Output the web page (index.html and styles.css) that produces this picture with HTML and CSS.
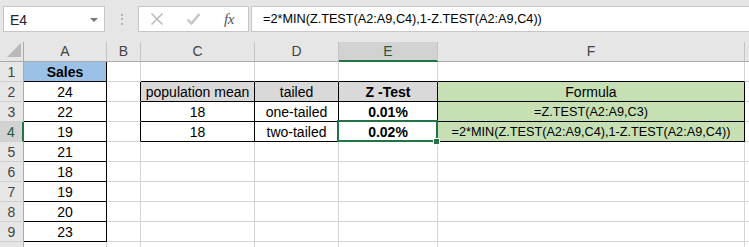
FILE: index.html
```html
<!DOCTYPE html>
<html>
<head>
<meta charset="utf-8">
<link rel="stylesheet" href="styles.css">
</head>
<body>
<div class="app">
  <div class="toolbar">
    <div class="namebox"><span class="name">E4</span><span class="caret"></span></div>
    <div class="grip"><i></i><i></i><i></i></div>
    <div class="fxbox">
      <svg class="ico" width="14" height="14" viewBox="0 0 14 14"><path d="M1.5 1.5 L12.5 12.5 M12.5 1.5 L1.5 12.5" stroke="#bcbcbc" stroke-width="1.6" fill="none"/></svg>
      <svg class="ico" width="15" height="14" viewBox="0 0 15 14"><path d="M1.5 7.5 L5.5 11.5 L13.5 2" stroke="#c4c4c4" stroke-width="2.4" fill="none"/></svg>
      <span class="fx">fx</span>
    </div>
    <div class="formula">=2*MIN(Z.TEST(A2:A9,C4),1-Z.TEST(A2:A9,C4))</div>
  </div>
  <div class="sheet">
    <div class="corner"><svg width="24" height="19" viewBox="0 0 24 19"><path d="M21 1 L21 15 L7 15 Z" fill="#b9b9b9"/></svg></div>
    <div class="ch">A</div><div class="ch">B</div><div class="ch">C</div><div class="ch">D</div><div class="ch sel">E</div><div class="ch">F</div><div class="ch"></div>

    <div class="rh">1</div><div class="c bx blue bold">Sales</div><div class="c"></div><div class="c bt"></div><div class="c bt"></div><div class="c bt"></div><div class="c bt"></div><div class="c"></div>

    <div class="rh">2</div><div class="c bx">24</div><div class="c bl"></div><div class="c bx grey">population mean</div><div class="c bx grey">tailed</div><div class="c bx grey bold">Z -Test</div><div class="c bx green">Formula</div><div class="c"></div>

    <div class="rh">3</div><div class="c bx">22</div><div class="c bl"></div><div class="c bx">18</div><div class="c bx">one-tailed</div><div class="c bx bold">0.01%</div><div class="c bx green f">=Z.TEST(A2:A9,C3)</div><div class="c"></div>

    <div class="rh rsel">4</div><div class="c bx">19</div><div class="c bl"></div><div class="c bx">18</div><div class="c bx">two-tailed</div><div class="c bx bold">0.02%</div><div class="c bx green f">=2*MIN(Z.TEST(A2:A9,C4),1-Z.TEST(A2:A9,C4))</div><div class="c"></div>

    <div class="rh">5</div><div class="c bx">21</div><div class="c"></div><div class="c"></div><div class="c"></div><div class="c"></div><div class="c"></div><div class="c"></div>
    <div class="rh">6</div><div class="c bx">18</div><div class="c"></div><div class="c"></div><div class="c"></div><div class="c"></div><div class="c"></div><div class="c"></div>
    <div class="rh">7</div><div class="c bx">19</div><div class="c"></div><div class="c"></div><div class="c"></div><div class="c"></div><div class="c"></div><div class="c"></div>
    <div class="rh">8</div><div class="c bx">20</div><div class="c"></div><div class="c"></div><div class="c"></div><div class="c"></div><div class="c"></div><div class="c"></div>
    <div class="rh">9</div><div class="c bx">23</div><div class="c"></div><div class="c"></div><div class="c"></div><div class="c"></div><div class="c"></div><div class="c"></div>
    <div class="rh"></div><div class="c"></div><div class="c"></div><div class="c"></div><div class="c"></div><div class="c"></div><div class="c"></div><div class="c"></div>

    <div class="selbox"></div>
    <div class="handle"></div>
  </div>
</div>
</body>
</html>
```

FILE: styles.css
```css
html, body {
  margin: 0;
  padding: 0;
  background: #e6e6e6;
  overflow: hidden;
}
.app {
  width: 749px;
  height: 247px;
  overflow: hidden;
  font-family: "Liberation Sans", Arial, sans-serif;
  color: #000;
}
.toolbar {
  height: 42px;
  box-sizing: border-box;
  padding: 6px 0 0 3px;
  display: flex;
  align-items: flex-start;
  background: #e6e6e6;
}
.namebox {
  width: 102px;
  height: 26px;
  box-sizing: border-box;
  background: #fff;
  border: 1px solid #c6c6c6;
  display: flex;
  align-items: center;
  justify-content: space-between;
  padding: 0 6px 0 6px;
}
.name {
  font-size: 14px;
  color: #222;
  padding-top: 1px;
}
.caret {
  width: 0;
  height: 0;
  border-left: 4px solid transparent;
  border-right: 4px solid transparent;
  border-top: 4px solid #767676;
  margin-top: 1px;
}
.grip {
  width: 33px;
  height: 26px;
  display: flex;
  flex-direction: column;
  align-items: center;
  justify-content: center;
  gap: 2.5px;
}
.grip i {
  display: block;
  width: 2px;
  height: 2px;
  background: #b4b4b4;
}
.fxbox {
  width: 111px;
  height: 26px;
  box-sizing: border-box;
  background: #fff;
  border: 1px solid #c6c6c6;
  display: flex;
  align-items: center;
  padding-left: 11px;
  gap: 22px;
}
.fx {
  font-family: "Liberation Serif", "Times New Roman", serif;
  font-style: italic;
  font-size: 15px;
  color: #555;
  margin-left: 1px;
  letter-spacing: -0.5px;
}
.formula {
  flex: 1;
  margin-left: 2px;
  margin-right: -4px;
  height: 26px;
  box-sizing: border-box;
  background: #fff;
  border: 1px solid #c6c6c6;
  font-size: 12.7px;
  line-height: 24px;
  padding-left: 11px;
  white-space: nowrap;
}
.sheet {
  position: relative;
  display: grid;
  grid-template-columns: 24px 83px 34px 114px 84px 99px 307px 20px;
  grid-auto-rows: 20px;
  background: #fff;
  font-size: 14px;
}
.corner, .ch, .rh {
  background: #e6e6e6;
  box-sizing: border-box;
  color: #444;
  font-size: 14px;
}
.corner {
  border-right: 1px solid #ababab;
  border-bottom: 1px solid #ababab;
}
.corner svg { display: block; }
.ch {
  border-right: 1px solid #c4c4c4;
  border-bottom: 1px solid #ababab;
  text-align: center;
  line-height: 19px;
}
.ch.sel {
  background: #d2d2d2;
  color: #1e5c3a;
  border-bottom: 2px solid #217346;
}
.rh {
  border-right: 1px solid #ababab;
  border-bottom: 1px solid #d0d0d0;
  text-align: center;
  line-height: 20px;
}
.rh.rsel {
  background: #d2d2d2;
  color: #1e5c3a;
  border-right: 2px solid #217346;
}
.c {
  box-sizing: border-box;
  border-right: 1px solid #d4d4d4;
  border-bottom: 1px solid #d4d4d4;
  text-align: center;
  line-height: 19px;
  padding-top: 1px;
  white-space: nowrap;
  overflow: hidden;
}
.c.bx {
  border-right-color: #000;
  border-bottom-color: #000;
}
.c.bl { border-right-color: #000; }
.c.bt { border-bottom-color: #000; }
.blue { background: #9bc2e6; }
.grey { background: #d9d9d9; }
.green { background: #c6e0b4; }
.bold { font-weight: bold; }
.f { font-size: 12.7px; }
.selbox {
  position: absolute;
  left: 337px;
  top: 78px;
  width: 101px;
  height: 22px;
  box-sizing: border-box;
  border: 2px solid #217346;
}
.handle {
  position: absolute;
  left: 433px;
  top: 96px;
  width: 5px;
  height: 5px;
  background: #217346;
  border: 1px solid #fff;
}
```
